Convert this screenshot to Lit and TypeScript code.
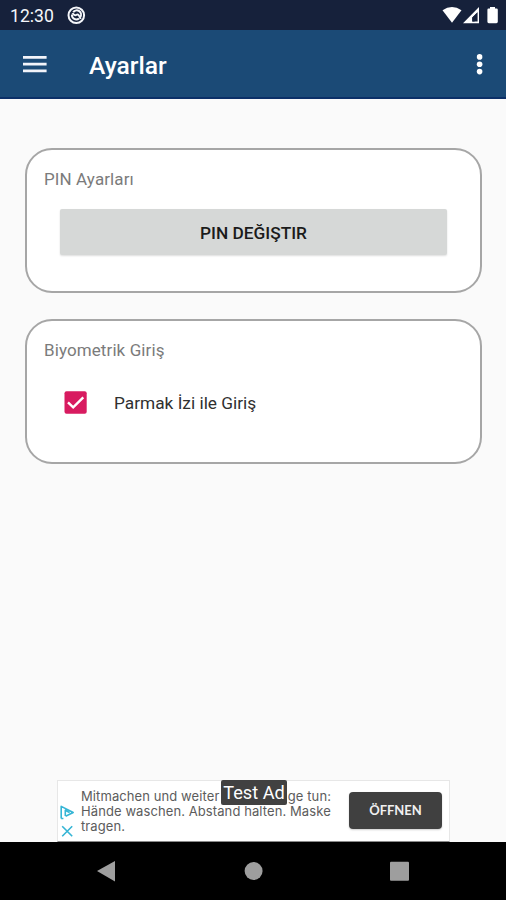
import { LitElement, html, css } from "lit";
import { customElement, property } from "lit/decorators.js";

@customElement("status-bar")
class StatusBar extends LitElement {
  static styles = css`
    :host { display: flex; height: 30px; background: #16213b; color: #f4f6fa; align-items: center; box-sizing: border-box; padding: 0 8px 0 10px; }
    .time { font-size: 17.6px; line-height: 30px; width: 56px; padding-top: 2px; }
    .space { flex: 1; }
    svg { display: block; }
  `;
  render() {
    return html`
      <span class="time">12:30</span>
      <svg width="20" height="30" viewBox="66 0 20 30">
        <circle cx="76.3" cy="15.2" r="7.8" fill="none" stroke="#f4f6fa" stroke-width="2" />
        <path d="M73.2 12.1A4.3 4.3 0 0 1 80.2 17.2M79 18.4A4.3 4.3 0 0 1 72 14.6" fill="none" stroke="#f4f6fa" stroke-width="2" />
        <path d="M72.4 13.2Q74.6 16.2 76.6 14.8T80.6 19" fill="none" stroke="#f4f6fa" stroke-width="2" />
      </svg>
      <span class="space"></span>
      <svg width="58" height="30" viewBox="440 0 58 30" fill="#fff">
        <path d="M442.5 10.3Q452 3.8 461.5 10.3L452 22.8Z" />
        <path fill-rule="evenodd" d="M479 7V23.2H463ZM477.6 12.2 472.3 17.4V21.6H477.6Z" />
        <path d="M477.6 12.2 472.3 17.4V21.6H474.6V17.5Z" fill="#16213b" />
        <path d="M490 7h5v1.6h1.6q1.2 0 1.2 1.2v12q0 1.4-1.4 1.4h-7.6q-1.4 0-1.4-1.4v-12q0-1.2 1.2-1.2H490Z" />
      </svg>
    `;
  }
}

@customElement("app-bar")
class AppBar extends LitElement {
  @property() heading = "";
  static styles = css`
    :host { display: flex; height: 69px; box-sizing: border-box; background: #1b4a76; border-bottom: 2px solid #0c3068; align-items: center; padding: 0 20px 0 23px; color: #fff; }
    h1 { margin: 0 0 0 42px; flex: 1; font-size: 24.6px; font-weight: 500; line-height: 30px; padding-top: 4px; }
    svg { display: block; }
  `;
  render() {
    return html`
      <svg width="24" height="20" viewBox="0 0 24 20" fill="#f2f4fa">
        <path d="M0 1.9h23.6v2.8H0zM0 8.7h23.6v2.8H0zM0 15.4h23.6v2.8H0z" />
      </svg>
      <h1>${this.heading}</h1>
      <svg width="12" height="24" viewBox="0 0 12 24" fill="#fff">
        <circle cx="5.6" cy="4.9" r="2.8" /><circle cx="5.6" cy="12.3" r="2.8" /><circle cx="5.6" cy="19.6" r="2.8" />
      </svg>
    `;
  }
}

@customElement("settings-card")
class SettingsCard extends LitElement {
  @property() heading = "";
  static styles = css`
    :host { display: block; height: 145px; box-sizing: border-box; border: 2px solid #a6a6a6; border-radius: 27px; background: #fff; padding: 18px 33px 0 17px; }
    h2 { margin: 0; font-size: 17px; font-weight: 400; line-height: 22px; color: #7b7b7b; letter-spacing: 0.1px; }
  `;
  render() {
    return html`<h2>${this.heading}</h2><slot></slot>`;
  }
}

@customElement("ad-banner")
class AdBanner extends LitElement {
  static styles = css`
    :host { position: relative; display: flex; width: 393px; height: 62px; box-sizing: border-box; border: 1px solid #e7e7e7; border-bottom: 1px solid #8a8a8a; background: #fff; margin: 0 auto; left: 0.5px; }
    .marks { width: 23px; flex: none; display: block; }
    .copy { width: 268px; flex: none; padding-top: 8px; font: 13px/15px Inter, sans-serif; letter-spacing: 0.09px; color: #5c5c5c; white-space: nowrap; }
    .line { display: flex; justify-content: space-between; width: 250px; }
    .open { width: 93px; height: 37px; margin-top: 11px; border: 0; border-radius: 4px; padding: 0; background: #404040; color: #f0f0f0; font: 700 13px/37px Lato, sans-serif; box-shadow: 0 1px 2px #0003; }
    .tag { position: absolute; left: 163px; top: -1px; width: 66px; height: 25px; border-radius: 2px; background: #414141; color: #fff; text-align: center; font-size: 18.2px; line-height: 25px; white-space: nowrap; }
  `;
  render() {
    return html`
      <svg class="marks" width="23" height="60" viewBox="58 781 23 60" fill="none" stroke="#35b5d5" stroke-width="1.6">
        <path d="M61.2 818.5V806.4L73.2 812.5 65.6 816.3M65.3 816V810.2L69.6 812.6M61.2 818.5H63.4" stroke-linejoin="round" />
        <path d="M62.2 826.2 72.2 836.2M72.2 826.2 62.2 836.2" />
      </svg>
      <div class="copy">
        <span class="line"><span>Mitmachen und weiter</span><span>ge tun:</span></span>
        <span class="line">Hände waschen. Abstand halten. Maske</span>
        <span class="line">tragen.</span>
      </div>
      <button class="open">ÖFFNEN</button>
      <span class="tag">Test Ad</span>
    `;
  }
}

@customElement("nav-bar")
class NavBar extends LitElement {
  static styles = css`
    :host { display: flex; height: 58px; background: #000; justify-content: center; }
    svg { display: block; }
  `;
  render() {
    return html`
      <svg width="506" height="58" viewBox="0 842 506 58" fill="#9e9e9e">
        <path d="M97 871 115 861V881.5Z" />
        <circle cx="253.6" cy="871" r="9" />
        <rect x="390" y="861.8" width="19" height="19" rx="1" />
      </svg>
    `;
  }
}

@customElement("app-root")
class AppRoot extends LitElement {
  static styles = css`
    :host { display: flex; flex-direction: column; height: 900px; background: #fafafa; font-family: Roboto, sans-serif; overflow: hidden; }
    main { flex: 1; display: flex; flex-direction: column; gap: 25.5px; padding: 49px 24px 0 25px; }
    .pin { display: block; width: 387px; height: 46px; margin: 19px 0 0 16px; border: 0; border-radius: 2px; padding: 2px 0 0; background: #d6d8d7; color: #1b1b1b; font: 500 17.3px/44px Roboto, sans-serif; box-shadow: 0 1px 2px #0002; }
    .option { display: flex; align-items: center; height: 24px; margin: 30px 0 0 20px; gap: 27px; font-size: 17.3px; line-height: 24px; color: #303030; white-space: nowrap; }
    .option svg { display: block; }
  `;
  render() {
    return html`
      <status-bar></status-bar>
      <app-bar heading="Ayarlar"></app-bar>
      <main>
        <settings-card heading="PIN Ayarları">
          <button class="pin">PIN DEĞIŞTIR</button>
        </settings-card>
        <settings-card heading="Biyometrik Giriş">
          <label class="option">
            <svg width="23" height="23" viewBox="0 0 23 23">
              <rect x="0.5" y="0.3" width="22.2" height="22.4" rx="2" fill="#d81b60" />
              <path d="M4 11.4 9.2 16.4 19.3 6.3" fill="none" stroke="#fff" stroke-width="2.4" />
            </svg>
            <span>Parmak İzi ile Giriş</span>
          </label>
        </settings-card>
      </main>
      <ad-banner></ad-banner>
      <nav-bar></nav-bar>
    `;
  }
}
